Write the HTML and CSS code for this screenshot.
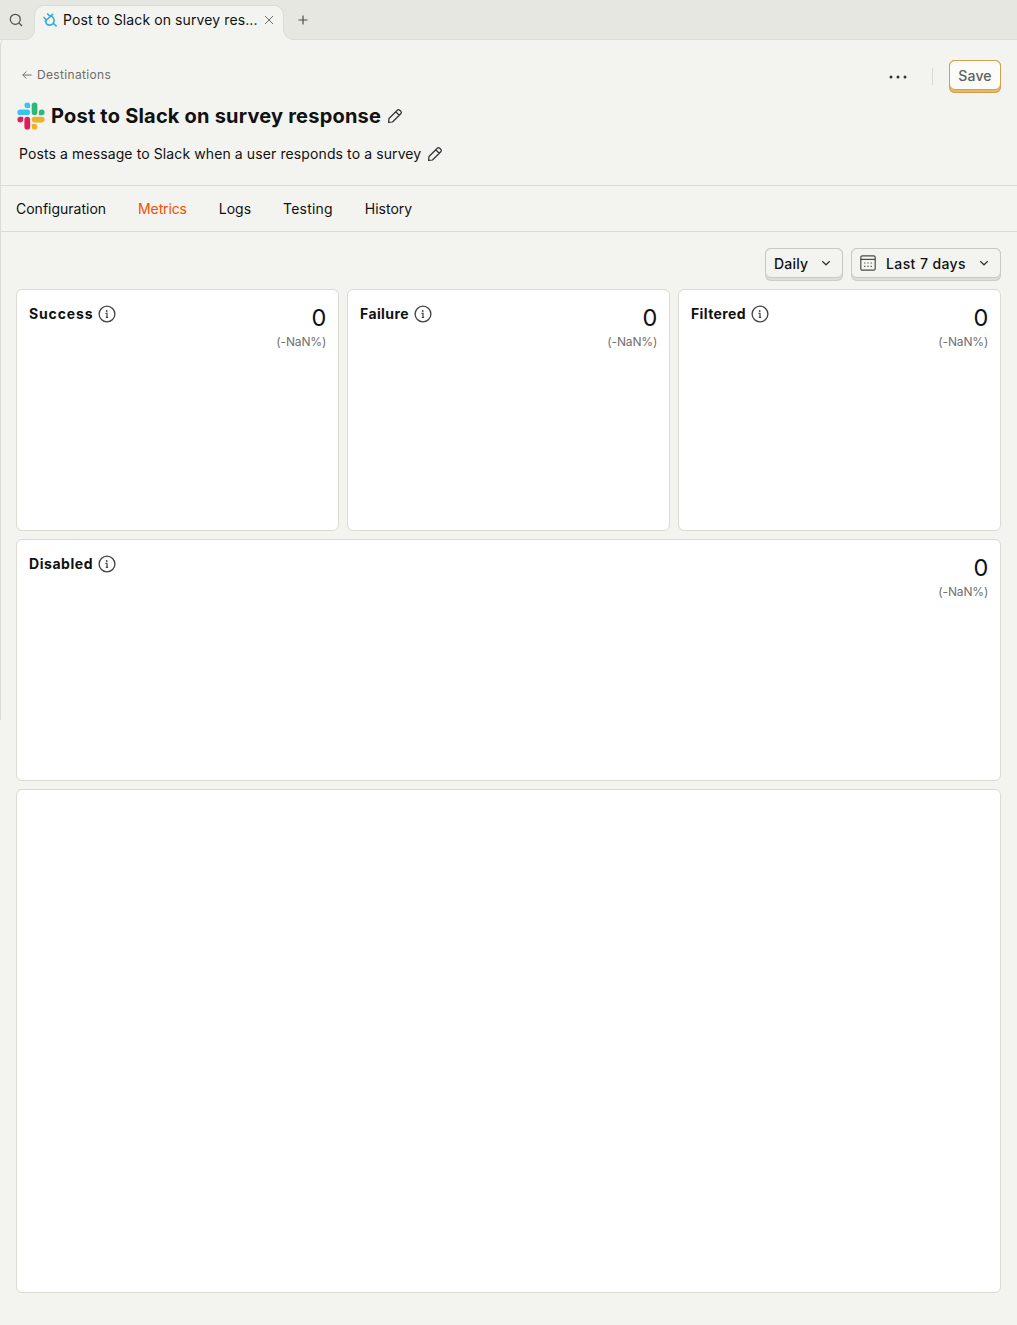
FILE: index.html
```html
<!DOCTYPE html>
<html lang="en">
<head>
<meta charset="utf-8">
<title>Post to Slack on survey response</title>
<link rel="stylesheet" href="styles.css">
</head>
<body>
<svg class="defs" width="0" height="0" aria-hidden="true">
  <symbol id="pencil" viewBox="0 0 16 16"><path d="M1.600 14.400l.4-3.900 8.300-8.300a1.700 1.700 0 0 1 2.400 0l1.100 1.100a1.700 1.700 0 0 1 0 2.400l-8.300 8.300zM8.700 3.800l3.500 3.500" fill="none" stroke="currentColor" stroke-width="1.250" stroke-linejoin="round"/></symbol>
  <symbol id="info" viewBox="0 0 18 18"><circle cx="9" cy="9" r="7.900" fill="none" stroke="currentColor" stroke-width="1.350"/><circle cx="8.700" cy="6" r=".9" fill="currentColor"/><path d="M7.500 8.400h1.500v4M7.800 12.300h2.300" fill="none" stroke="currentColor" stroke-width="1.200"/></symbol>
  <symbol id="chevron" viewBox="0 0 10 10"><path d="M1.300 3.200L5 6.800l3.700-3.600" fill="none" stroke="currentColor" stroke-width="1.200"/></symbol>
</svg>
<header class="tabbar">
  <svg class="search" width="14" height="14" viewBox="0 0 14 14"><circle cx="6.300" cy="6.300" r="5" fill="none" stroke="currentColor" stroke-width="1.200"/><path d="M10 10l3 3" stroke="currentColor" stroke-width="1.200"/></svg>
  <div class="tab">
    <svg class="tab-shape" width="270" height="40" viewBox="0 0 270 40"><path class="tab-fill" d="M0 40v-.5a9.500 10 0 0 0 9.500-10V15a9 9.500 0 0 1 9-9.500h231a9 9.500 0 0 1 9 9.500v14.500a10.500 10 0 0 0 10.500 10v.5z"/><path class="tab-line" d="M0 39.500a9.500 10 0 0 0 9.500-10V15a9 9.500 0 0 1 9-9.500h231a9 9.500 0 0 1 9 9.500v14.500a10.500 10 0 0 0 10.500 10"/></svg>
    <svg class="plug" width="14" height="14" viewBox="0 0 14 14"><path d="M1.700 8.800L10.200.9M.5 4l3.200 3.100M4.100.5l3.200 3.100M3.200 7.500c-.5 1.600-.2 2.800.6 3.600.9.900 2.200 1.200 3.500.9 1.900-.2 3.300-1.600 3.700-3.300.4-1.500.1-2.800-.8-3.800L8.600 2.600M10 10l3.600 3.500" fill="none" stroke="currentColor" stroke-width="1.500"/></svg>
    <span class="tab-title">Post to Slack on survey res...</span>
    <svg class="close" width="10" height="10" viewBox="0 0 10 10"><path d="M1 1l8 8M9 1L1 9" stroke="currentColor"/></svg>
  </div>
  <svg class="plus" width="10" height="10" viewBox="0 0 10 10"><path d="M5 .5v9M.5 5h9" stroke="currentColor" stroke-width="1.200"/></svg>
</header>
<main class="scene">
  <section class="head">
    <div class="topline">
      <a class="back"><svg width="10" height="10" viewBox="0 0 10 10"><path d="M9.500 5H.8M4.300 1.500L.8 5l3.500 3.500" fill="none" stroke="currentColor"/></svg>Destinations</a>
      <div class="actions">
        <svg width="18" height="4" viewBox="0 0 18 4" fill="#333"><circle cx="2" cy="2" r="1.500"/><circle cx="9" cy="2" r="1.500"/><circle cx="16" cy="2" r="1.500"/></svg>
        <span class="divider"></span>
        <button class="btn save"><span>Save</span></button>
      </div>
    </div>
    <h1><svg class="slack" width="28" height="28" viewBox="0 0 28 28"><g fill="#36c5f0"><path d="M10.300.4a2.850 2.850 0 0 1 2.850 2.850V6.100H10.300a2.850 2.850 0 0 1 0-5.700z"/><rect x=".4" y="7.400" width="12.700" height="5.700" rx="2.850"/></g><g fill="#2eb67d"><rect x="14.700" y=".4" width="5.700" height="12.700" rx="2.850"/><path d="M27.600 10.300a2.850 2.850 0 0 1-2.850 2.850H21.900V10.300a2.850 2.850 0 0 1 5.700 0z"/></g><g fill="#ecb22e"><rect x="14.700" y="14.700" width="12.900" height="5.700" rx="2.850"/><path d="M17.600 27.600a2.850 2.850 0 0 1-2.850-2.850V21.900h2.850a2.850 2.850 0 0 1 0 5.700z"/></g><g fill="#e01e5a"><rect x="7.400" y="14.700" width="5.700" height="12.900" rx="2.850"/><path d="M.4 17.600a2.850 2.850 0 0 1 2.850-2.850H6.100v2.850a2.850 2.850 0 0 1-5.700 0z"/></g></svg><span>Post to Slack on survey response</span><svg class="edit" width="16" height="16"><use href="#pencil"/></svg></h1>
    <p class="desc"><span>Posts a message to Slack when a user responds to a survey</span><svg class="edit" width="16" height="16"><use href="#pencil"/></svg></p>
  </section>
  <nav class="nav"><a>Configuration</a><a class="active">Metrics</a><a>Logs</a><a class="testing">Testing</a><a>History</a></nav>
  <section class="metrics">
    <div class="filters">
      <button class="btn daily"><span>Daily<svg class="chev" width="10" height="10"><use href="#chevron"/></svg></span></button>
      <button class="btn range"><span><svg class="cal" width="16" height="16" viewBox="0 0 16 16"><rect x=".8" y=".8" width="14.400" height="14.400" rx="1.500" fill="none" stroke="currentColor" stroke-width="1.200"/><path d="M.8 4.400h14.400" stroke="currentColor" stroke-width="1.200"/><path d="M7.400 8h1.200M10.700 8h1.200M4.100 8h1.200M4.100 11.400h1.200M7.400 11.400h1.200M10.700 11.400h1.200" stroke="currentColor" stroke-width="1.200"/></svg>Last 7 days<svg class="chev" width="10" height="10"><use href="#chevron"/></svg></span></button>
    </div>
    <div class="cards">
      <article class="card success"><h2>Success<svg width="18" height="18"><use href="#info"/></svg></h2><div class="value"><strong>0</strong><small>(-NaN%)</small></div></article>
      <article class="card"><h2>Failure<svg width="18" height="18"><use href="#info"/></svg></h2><div class="value"><strong>0</strong><small>(-NaN%)</small></div></article>
      <article class="card"><h2>Filtered<svg width="18" height="18"><use href="#info"/></svg></h2><div class="value"><strong>0</strong><small>(-NaN%)</small></div></article>
      <article class="card wide disabled"><h2>Disabled<svg width="18" height="18"><use href="#info"/></svg></h2><div class="value"><strong>0</strong><small>(-NaN%)</small></div></article>
      <article class="card wide chart"></article>
    </div>
  </section>
</main>
</body>
</html>
```
FILE: styles.css
```css
* { box-sizing: border-box; }
body { margin: 0; min-height: 1325px; background: #f3f4ef; color: #111; font: 14px/20px Inter, sans-serif; }
svg { display: block; flex: none; }
.defs { position: absolute; }
.tabbar { display: flex; align-items: center; height: 40px; padding-left: 9px; background: #e5e7e0; border-bottom: 1px solid #dadbd2; color: #4d4f4a; }
.tab { position: relative; display: flex; align-items: center; width: 249px; height: 40px; margin-left: 12px; padding-left: 8px; color: #111; }
.tab-shape { position: absolute; left: -10px; top: 0; }
.tab-fill { fill: #f3f4ef; }
.tab-line { fill: none; stroke: #dadbd2; }
.plug, .tab-title, .close { position: relative; }
.plug { color: #30abda; }
.tab-title { width: 195px; margin-left: 6px; white-space: nowrap; letter-spacing: .1px; }
.close { margin-left: 6px; color: #6b6c68; }
.plus { margin-left: 14px; }
.scene { position: relative; }
.scene::before { content: ""; position: absolute; left: 0; top: -1px; width: 8px; height: 681px; border-left: 1px solid #dadbd2; border-top-left-radius: 6px; }
.head { height: 146px; padding: 20px 16px 0; border-bottom: 1px solid #dadbd2; }
.topline { display: flex; justify-content: space-between; }
.back { display: flex; align-items: center; gap: 5px; height: 30px; padding-left: 6px; font-size: 12px; color: #6d6e6a; letter-spacing: .33px; }
.actions { display: flex; align-items: center; height: 33px; }
.divider { width: 1px; height: 17px; margin: 0 16px 0 25px; background: #dadbd2; }
.btn { display: block; height: 33px; padding: 0 0 3px; border: 0; border-radius: 6px; font: 500 14px/20px Inter, sans-serif; background: #dfdcd9; box-shadow: inset 0 0 0 1px #cdcdca; }
.btn > span { display: flex; align-items: center; height: 30px; padding-top: 1px; border: 1px solid #c8c8c6; border-radius: 6px; background: #f3f4ef; color: #111; }
.btn.save { width: 52px; background: #edb660; box-shadow: inset 0 0 0 1px #d0a052; }
.btn.save > span { justify-content: center; background: #fbfbf9; border-color: #cfa04f; color: #60605e; letter-spacing: .2px; }
h1 { display: flex; align-items: center; height: 28px; margin: 9px 0 0 1px; font-size: 20px; line-height: 28px; font-weight: 700; }
h1 span { margin-left: 6px; letter-spacing: .21px; }
.edit { margin-left: 6px; color: #333; }
.desc { display: flex; align-items: center; margin: 14px 0 0 3px; letter-spacing: .105px; }
.nav { display: flex; gap: 32px; height: 46px; padding: 13px 16px 0; border-bottom: 1px solid #dadbd2; }
.nav .active { color: #f54e00; letter-spacing: -.14px; }
.nav .testing { letter-spacing: .2px; }
.metrics { padding: 16px; }
.filters { display: flex; justify-content: flex-end; gap: 8px; margin-bottom: 8px; }
.filters .btn > span { padding: 1px 11px 0 8px; }
.daily { width: 78px; }
.range { width: 150px; letter-spacing: .4px; }
.daily { letter-spacing: .2px; }
.chev { margin: -1px 0 0 auto; color: #333; }
.cal { margin: -1px 10px 0 0; color: #4a4a48; }
.cards { display: grid; grid-template-columns: repeat(3, 1fr); gap: 8px; }
.card { display: flex; justify-content: space-between; height: 242px; padding: 12px; background: #fff; border: 1px solid #dadbd2; border-radius: 6px; }
.wide { grid-column: 1 / -1; }
.chart { height: 504px; }
h2 { display: flex; align-items: center; gap: 5px; height: 24px; margin: 0; font-size: 14px; font-weight: 700; letter-spacing: .4px; }
.success h2 { letter-spacing: .85px; }
.disabled h2 { letter-spacing: .55px; }
h2 svg { color: #444; }
.value { display: flex; flex-direction: column; align-items: flex-end; margin-right: -.3px; }
.value strong { font-size: 23.500px; line-height: 32px; font-weight: 400; }
.value small { font-size: 12px; line-height: 16px; color: #707070; letter-spacing: -.12px; }
```
